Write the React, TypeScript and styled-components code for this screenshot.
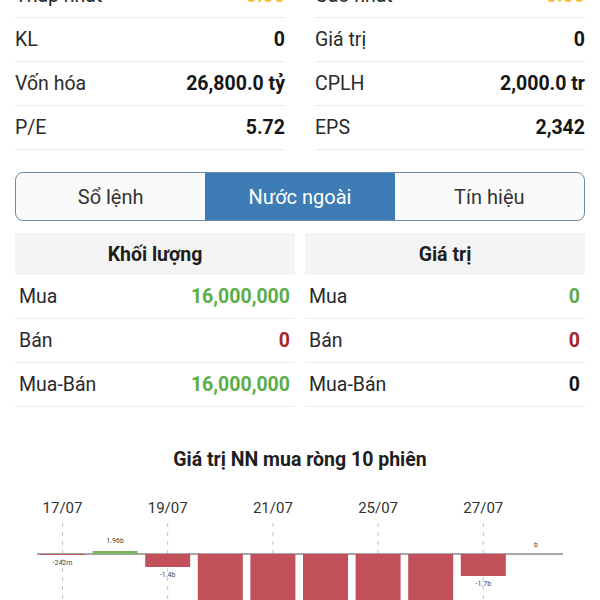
import { Fragment } from "react";
import styled, { createGlobalStyle } from "styled-components";

const GlobalStyle = createGlobalStyle`
  html, body {
    margin: 0;
    padding: 0;
    background: #ffffff;
    overflow: hidden;
  }
  body {
    font-family: Roboto, "Noto Sans", "Liberation Sans", sans-serif;
    color: #222;
  }
`

const Page = styled.div`
  width: 600px;
  height: 600px;
  overflow: hidden;
`

const InfoGrid = styled.div`
  margin-top: -26px;
  padding: 0 15px;
  display: grid;
  grid-template-columns: 1fr 1fr;
  column-gap: 30px;
`

const InfoRow = styled.div`
  height: 43px;
  display: flex;
  align-items: center;
  justify-content: space-between;
  border-bottom: 1px solid #ececec;
  font-size: 19.5px;
`

const Label = styled.span`
  color: #2a2a2a;
`

const Value = styled.span<{ $tone?: "up" | "down" | "ref" }>`
  font-weight: 700;
  color: ${(p) =>
    p.$tone === "up" ? "#5cad4a" : p.$tone === "down" ? "#a8242b" : p.$tone === "ref" ? "#f2c23f" : "#161616"};
`

const Tabs = styled.div`
  margin: 22px 15px 0;
  height: 47px;
  display: grid;
  grid-template-columns: repeat(3, 1fr);
  border: 1px solid #6a8aa5;
  border-radius: 8px;
  overflow: hidden;
  background: #fafafa;
`

const TabItem = styled.div<{ $active?: boolean }>`
  display: flex;
  align-items: center;
  justify-content: center;
  font-size: 20px;
  color: ${(p) => (p.$active ? "#ffffff" : "#333")};
  background: ${(p) => (p.$active ? "#3d7cb4" : "transparent")};
`

const Columns = styled.div`
  margin-top: 12px;
  padding: 0 15px;
  display: grid;
  grid-template-columns: 1fr 1fr;
  column-gap: 10px;
`

const Column = styled.div`
  display: flex;
  flex-direction: column;
`

const ColHead = styled.div`
  height: 42px;
  display: flex;
  align-items: center;
  justify-content: center;
  background: #f4f4f4;
  font-size: 19.5px;
  font-weight: 700;
  color: #1e1e1e;
`

const DataRow = styled(InfoRow)`
  padding: 0 5px 0 4px;
`

const ChartTitle = styled.div`
  margin-top: 41px;
  text-align: center;
  font-size: 19.5px;
  font-weight: 700;
  color: #1e1e1e;
`

const Chart = styled.svg`
  display: block;
  margin-top: 17px;
`

const topRows = [
  ["Thấp nhất", "0.00", "Cao nhất", "0.00"],
  ["KL", "0", "Giá trị", "0"],
  ["Vốn hóa", "26,800.0 tỷ", "CPLH", "2,000.0 tr"],
  ["P/E", "5.72", "EPS", "2,342"],
];

type Tone = "up" | "down" | undefined;

const volume: [string, string, Tone][] = [
  ["Mua", "16,000,000", "up"],
  ["Bán", "0", "down"],
  ["Mua-Bán", "16,000,000", "up"],
];

const value: [string, string, Tone][] = [
  ["Mua", "0", "up"],
  ["Bán", "0", "down"],
  ["Mua-Bán", "0", undefined],
];

// net value per session, in pixels from the zero line (positive = buy)
const sessions = [
  { date: "17/07", h: -1, note: "-242m" },
  { date: "18/07", h: 3, note: "1.96b" },
  { date: "19/07", h: -13, note: "-1.4b" },
  { date: "20/07", h: -90, note: "" },
  { date: "21/07", h: -90, note: "" },
  { date: "24/07", h: -90, note: "" },
  { date: "25/07", h: -90, note: "" },
  { date: "26/07", h: -90, note: "" },
  { date: "27/07", h: -22, note: "-1.7b" },
  { date: "28/07", h: 0, note: "b" },
];

function NetChart() {
  const zero = 66;
  const barW = 45;
  return (
    <Chart width={600} height={130} viewBox="0 0 600 130">
      {sessions.map((s, i) => {
        const cx = 62.5 + 52.6 * i;
        if (i % 2 !== 0 || i === 9) return null;
        return (
          <g key={"g" + s.date}>
            <text x={cx} y={25} fontSize={15} fill="#333" textAnchor="middle" fontFamily="Roboto, sans-serif">
              {s.date}
            </text>
            <line x1={cx} y1={35} x2={cx} y2={130} stroke="#c4c4c4" strokeDasharray="4 5" />
          </g>
        );
      })}
      <line x1={37} y1={zero} x2={563} y2={zero} stroke="#8a8a8a" strokeWidth={1.5} />
      {sessions.map((s, i) => {
        const cx = 62.5 + 52.6 * i;
        if (s.h === 0) {
          return (
            <text key={s.date} x={cx} y={zero - 7} fontSize={7} fill="#444" textAnchor="middle">
              {s.note}
            </text>
          );
        }
        const up = s.h > 0;
        const y = up ? zero - s.h : zero;
        return (
          <g key={s.date}>
            <rect x={cx - barW / 2} y={y} width={barW} height={Math.abs(s.h)} fill={up ? "#7db760" : "#c1505a"} />
            {s.note && (
              <text
                x={cx}
                y={up ? y - 8 : zero + Math.abs(s.h) + 10}
                fontSize={7}
                fill="#444"
                textAnchor="middle"
              >
                {s.note}
              </text>
            )}
          </g>
        );
      })}
    </Chart>
  );
}

export default function App() {
  return (
    <Page>
      <GlobalStyle />
      <InfoGrid>
        {topRows.map((r) => (
          <Fragment key={r[0]}>
            <InfoRow>
              <Label>{r[0]}</Label>
              <Value $tone={r[0] === "Thấp nhất" ? "ref" : undefined}>{r[1]}</Value>
            </InfoRow>
            <InfoRow>
              <Label>{r[2]}</Label>
              <Value $tone={r[2] === "Cao nhất" ? "ref" : undefined}>{r[3]}</Value>
            </InfoRow>
          </Fragment>
        ))}
      </InfoGrid>

      <Tabs>
        <TabItem>Sổ lệnh</TabItem>
        <TabItem $active>Nước ngoài</TabItem>
        <TabItem>Tín hiệu</TabItem>
      </Tabs>

      <Columns>
        <Column>
          <ColHead>Khối lượng</ColHead>
          {volume.map(([l, v, t]) => (
            <DataRow key={l}>
              <Label>{l}</Label>
              <Value $tone={t}>{v}</Value>
            </DataRow>
          ))}
        </Column>
        <Column>
          <ColHead>Giá trị</ColHead>
          {value.map(([l, v, t]) => (
            <DataRow key={l}>
              <Label>{l}</Label>
              <Value $tone={t}>{v}</Value>
            </DataRow>
          ))}
        </Column>
      </Columns>

      <ChartTitle>Giá trị NN mua ròng 10 phiên</ChartTitle>
      <NetChart />
    </Page>
  );
}
